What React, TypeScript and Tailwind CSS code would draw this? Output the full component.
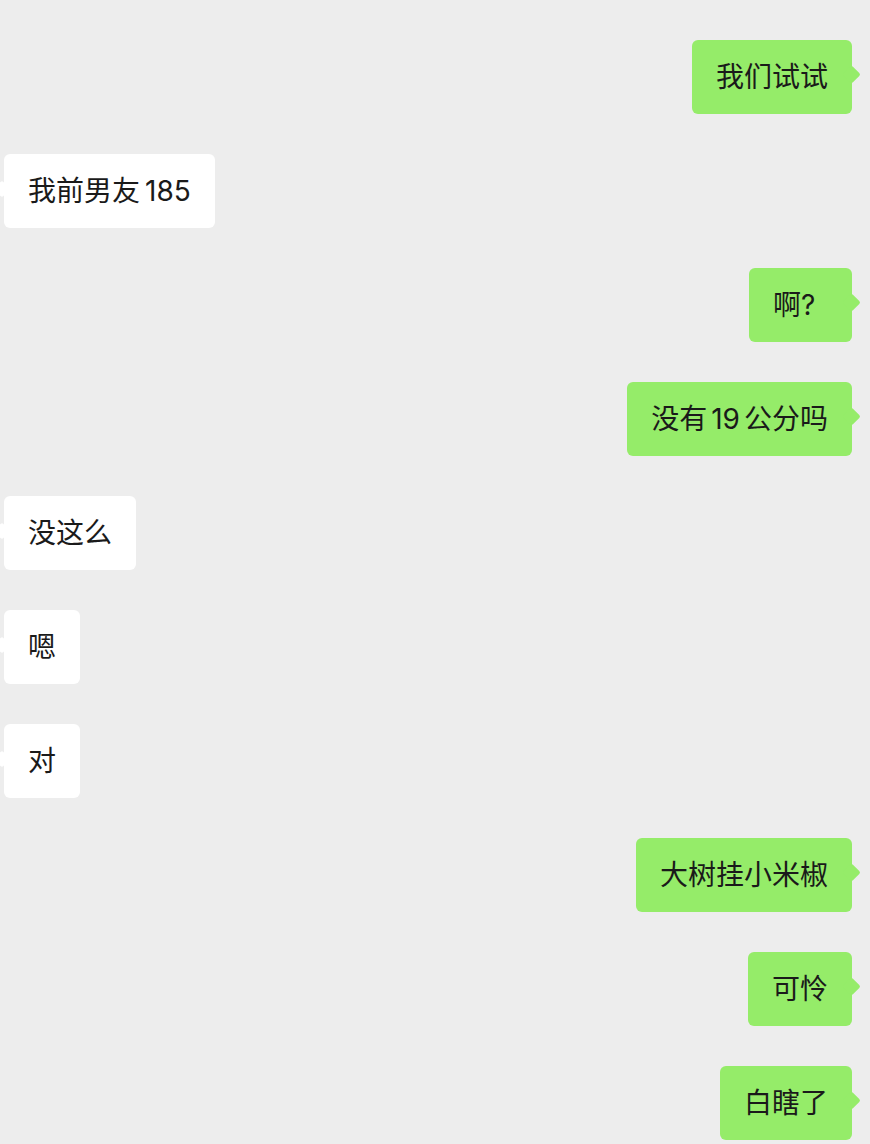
import React from "react";

type Msg = { side: "left" | "right"; text: React.ReactNode };

const messages: Msg[] = [
  { side: "right", text: "我们试试" },
  { side: "left", text: <>我前男友<span className="ml-[5px]">185</span></> },
  { side: "right", text: <>啊<span className="inline-block w-[27px]">?</span></> },
  { side: "right", text: <>没有<span className="mx-[4px]">19</span>公分吗</> },
  { side: "left", text: "没这么" },
  { side: "left", text: "嗯" },
  { side: "left", text: "对" },
  { side: "right", text: "大树挂小米椒" },
  { side: "right", text: "可怜" },
  { side: "right", text: "白瞎了" },
];

export default function App() {
  return (
    <div
      className="w-[870px] h-[1144px] overflow-hidden bg-[#ededed] pt-[40px] pl-[4px] pr-[18px] flex flex-col gap-[40px]"
      style={{ fontFamily: 'Inter, "Noto Sans CJK SC", sans-serif' }}
    >
      {messages.map((m, i) => (
        <Bubble key={i} side={m.side}>
          {m.text}
        </Bubble>
      ))}
    </div>
  );
}

function Bubble({ side, children }: { side: "left" | "right"; children: React.ReactNode }) {
  const right = side === "right";
  return (
    <div className={right ? "flex justify-end" : "flex justify-start"}>
      <div
        className={
          "relative h-[74px] px-[24px] flex items-center rounded-[6px] text-[28px] leading-none text-[#1a1a1a] " +
          (right ? "bg-[#95ec69]" : "bg-white")
        }
      >
        {right ? (
          <div className="absolute top-[28px] right-[-6px] w-[13px] h-[13px] rotate-45 rounded-[2px] bg-[#95ec69]" />
        ) : (
          <div className="absolute top-[29px] left-[-8px] w-[12px] h-[12px] rotate-45 rounded-[2px] bg-white" />
        )}
        <span className="relative whitespace-nowrap">{children}</span>
      </div>
    </div>
  );
}
